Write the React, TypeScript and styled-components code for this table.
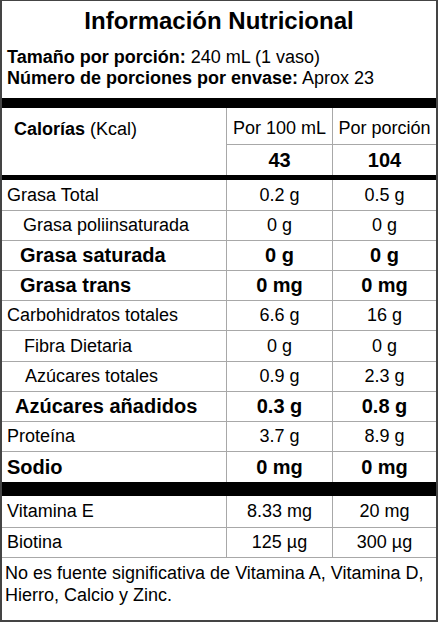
import React from "react";
import styled, { createGlobalStyle } from "styled-components";

const GlobalStyle = createGlobalStyle`
  html, body { margin: 0; padding: 0; background: #fff; }
  body { font-family: "Liberation Sans", Arial, Helvetica, sans-serif; color: #000; }
  * { box-sizing: border-box; }
`;

const LINE = "#a8a8a8";

const Label = styled.div`
  width: 438px;
  height: 622px;
  border: 2px solid #444;
  border-top-width: 1px;
  display: flex;
  flex-direction: column;
  background: #fff;
`;

const Header = styled.header`
  height: 97px;
  padding: 6px 5px 0 5px;
`;

const Title = styled.h1`
  margin: 0 0 12px 0;
  font-size: 24px;
  line-height: 28px;
  font-weight: 700;
  text-align: center;
`;

const ServingLine = styled.div`
  font-size: 18px;
  line-height: 21px;
  white-space: nowrap;
`;

const Strong = styled.strong`
  font-weight: 700;
`;

const Bar = styled.div<{ $h: number }>`
  height: ${(p) => p.$h}px;
  background: #000;
  flex: none;
`;

const CalorieGrid = styled.div`
  display: grid;
  grid-template-columns: 224px 106px 1fr;
  grid-template-rows: 37px 30px;
  height: 67px;
`;

const CaloriesLabel = styled.div`
  grid-row: 1 / span 2;
  padding: 11px 0 0 12px;
  font-size: 18px;
  line-height: 21px;
`;

const ColHead = styled.div`
  border-left: 1px solid ${LINE};
  border-bottom: 1px solid ${LINE};
  padding-top: 10px;
  font-size: 18px;
  line-height: 21px;
  text-align: center;
  white-space: nowrap;
`;

const CalValue = styled.div`
  border-left: 1px solid ${LINE};
  display: flex;
  align-items: center;
  justify-content: center;
  font-size: 20px;
  line-height: 24px;
  font-weight: 700;
`;

const Row = styled.div<{ $h: number; $last?: boolean }>`
  display: grid;
  grid-template-columns: 224px 106px 1fr;
  height: ${(p) => p.$h}px;
  border-bottom: ${(p) => (p.$last ? "none" : `1px solid ${LINE}`)};
  flex: none;
`;

const Name = styled.div<{ $indent: number; $bold?: boolean }>`
  display: flex;
  align-items: center;
  padding-left: ${(p) => p.$indent}px;
  font-size: ${(p) => (p.$bold ? 20 : 18)}px;
  line-height: ${(p) => (p.$bold ? 23 : 21)}px;
  font-weight: ${(p) => (p.$bold ? 700 : 400)};
  white-space: nowrap;
`;

const Value = styled.div<{ $bold?: boolean }>`
  display: flex;
  align-items: center;
  justify-content: center;
  border-left: 1px solid ${LINE};
  font-size: ${(p) => (p.$bold ? 20 : 18)}px;
  line-height: ${(p) => (p.$bold ? 23 : 21)}px;
  font-weight: ${(p) => (p.$bold ? 700 : 400)};
  white-space: nowrap;
`;

const Footer = styled.footer`
  flex: 1;
  padding: 4px 2px 0 3px;
  font-size: 18px;
  line-height: 22px;
`;

type Nutrient = {
  label: string;
  x: number;
  a: string;
  b: string;
  bold?: boolean;
  h?: number;
  last?: boolean;
};

const nutrients: Nutrient[] = [
  { label: "Grasa Total", x: 7, a: "0.2 g", b: "0.5 g", h: 31 },
  { label: "Grasa poliinsaturada", x: 23, a: "0 g", b: "0 g" },
  { label: "Grasa saturada", x: 20, a: "0 g", b: "0 g", bold: true },
  { label: "Grasa trans", x: 20, a: "0 mg", b: "0 mg", bold: true },
  { label: "Carbohidratos totales", x: 7, a: "6.6 g", b: "16 g" },
  { label: "Fibra Dietaria", x: 24, a: "0 g", b: "0 g", h: 31 },
  { label: "Azúcares totales", x: 25, a: "0.9 g", b: "2.3 g" },
  { label: "Azúcares añadidos", x: 15, a: "0.3 g", b: "0.8 g", bold: true },
  { label: "Proteína", x: 7, a: "3.7 g", b: "8.9 g" },
  { label: "Sodio", x: 7, a: "0 mg", b: "0 mg", bold: true, last: true },
];

const vitamins: Nutrient[] = [
  { label: "Vitamina E", x: 7, a: "8.33 mg", b: "20 mg", h: 32 },
  { label: "Biotina", x: 7, a: "125 µg", b: "300 µg", h: 30 },
];

const NutrientRow = ({ n }: { n: Nutrient }) => (
  <Row $h={n.h ?? 30} $last={n.last}>
    <Name $indent={n.x - 2} $bold={n.bold}>
      {n.label}
    </Name>
    <Value $bold={n.bold}>{n.a}</Value>
    <Value $bold={n.bold}>{n.b}</Value>
  </Row>
);

export default function App() {
  return (
    <>
      <GlobalStyle />
      <Label>
        <Header>
          <Title>Información Nutricional</Title>
          <ServingLine>
            <Strong>Tamaño por porción:</Strong> 240 mL (1 vaso)
          </ServingLine>
          <ServingLine>
            <Strong>Número de porciones por envase:</Strong> Aprox 23
          </ServingLine>
        </Header>
        <Bar $h={10} />
        <CalorieGrid>
          <CaloriesLabel>
            <Strong>Calorías</Strong> (Kcal)
          </CaloriesLabel>
          <ColHead>Por 100 mL</ColHead>
          <ColHead>Por porción</ColHead>
          <CalValue>43</CalValue>
          <CalValue>104</CalValue>
        </CalorieGrid>
        <Bar $h={5} />
        {nutrients.map((n) => (
          <NutrientRow key={n.label} n={n} />
        ))}
        <Bar $h={14} />
        {vitamins.map((n) => (
          <NutrientRow key={n.label} n={n} />
        ))}
        <Footer>
          No es fuente significativa de Vitamina A, Vitamina D, Hierro, Calcio y Zinc.
        </Footer>
      </Label>
    </>
  );
}
